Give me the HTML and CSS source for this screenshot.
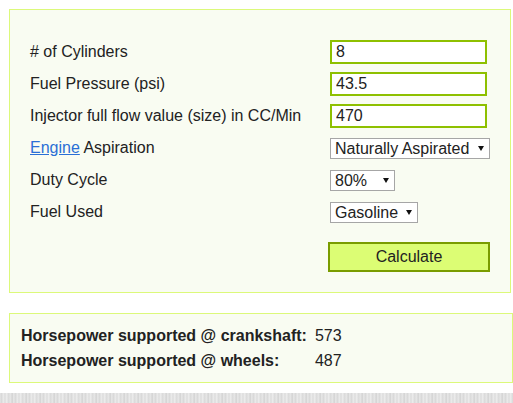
FILE: index.html
```html
<!DOCTYPE html>
<html>
<head>
<meta charset="utf-8">
<link rel="stylesheet" href="styles.css">
</head>
<body>
<div class="page">
  <form class="panel calc">
    <div class="grid">
      <label class="lbl"># of Cylinders</label>
      <div class="ctl"><input class="txt" type="text" value="8"></div>
      <label class="lbl">Fuel Pressure (psi)</label>
      <div class="ctl"><input class="txt" type="text" value="43.5"></div>
      <label class="lbl">Injector full flow value (size) in CC/Min</label>
      <div class="ctl"><input class="txt" type="text" value="470"></div>
      <label class="lbl"><a href="#" class="link">Engine</a> Aspiration</label>
      <div class="ctl"><span class="sel sel-asp"><select><option>Naturally Aspirated</option></select></span></div>
      <label class="lbl">Duty Cycle</label>
      <div class="ctl"><span class="sel sel-duty"><select><option>80%</option></select></span></div>
      <label class="lbl">Fuel Used</label>
      <div class="ctl"><span class="sel sel-fuel"><select><option>Gasoline</option></select></span></div>
    </div>
    <div class="actions">
      <button type="button" class="btn">Calculate</button>
    </div>
  </form>
  <div class="panel results">
    <div class="rk">Horsepower supported @ crankshaft:</div><div class="rv">573</div>
    <div class="rk">Horsepower supported @ wheels:</div><div class="rv">487</div>
  </div>
</div>
<div class="strip"></div>
</body>
</html>
```
FILE: styles.css
```css
html, body {
  margin: 0;
  padding: 0;
  background: #ffffff;
}
body {
  font-family: Arial, "Liberation Sans", sans-serif;
  font-size: 16px;
  color: #222222;
}
.page {
  padding: 9px 0 0 9px;
}
.panel {
  box-sizing: border-box;
  background: #f9fcf2;
  border: 1px solid #dcf97a;
  margin: 0;
}
.calc {
  width: 502px;
  height: 284px;
  padding: 30px 20px 20px 20px;
}
.grid {
  display: grid;
  grid-template-columns: 300px auto;
  grid-auto-rows: 24px;
  row-gap: 8px;
  align-items: center;
}
.lbl {
  line-height: 18px;
  white-space: nowrap;
}
.link {
  color: #2a6fd6;
  text-decoration: underline;
}
.ctl {
  display: flex;
  align-items: center;
  height: 24px;
}
.txt {
  box-sizing: border-box;
  width: 157px;
  height: 24px;
  border: 2px solid #8ec000;
  background: #ffffff;
  padding: 0 4px;
  font-family: Arial, "Liberation Sans", sans-serif;
  font-size: 16px;
  color: #222222;
  outline: none;
}
.sel {
  position: relative;
  display: inline-block;
  height: 21px;
}
.sel select {
  -webkit-appearance: none;
  appearance: none;
  box-sizing: border-box;
  height: 21px;
  border: 1px solid #a6a6a6;
  border-radius: 0;
  background: #ffffff;
  padding: 0 0 0 4px;
  margin: 0;
  font-family: Arial, "Liberation Sans", sans-serif;
  font-size: 16px;
  color: #222222;
  line-height: 19px;
  outline: none;
}
.sel::after {
  content: "";
  position: absolute;
  right: 6px;
  top: 8px;
  border-left: 3.5px solid transparent;
  border-right: 3.5px solid transparent;
  border-top: 5px solid #111111;
  pointer-events: none;
}
.sel-asp select { width: 160px; }
.sel-duty select { width: 65px; }
.sel-fuel select { width: 88px; }
.actions {
  margin-top: 18px;
  padding-left: 298px;
}
.btn {
  box-sizing: border-box;
  width: 162px;
  height: 30px;
  background: #dcfd74;
  border: 2px solid #7a9c00;
  border-radius: 0;
  font-family: Arial, "Liberation Sans", sans-serif;
  font-size: 16px;
  color: #222222;
  padding: 0;
  margin: 0;
}
.results {
  width: 504px;
  height: 70px;
  margin-top: 20px;
  padding: 9px 11px;
  display: grid;
  grid-template-columns: max-content auto;
  grid-auto-rows: 25px;
  column-gap: 8px;
  align-items: center;
}
.rk {
  font-weight: bold;
  white-space: nowrap;
}
.strip {
  margin-top: 10px;
  height: 10px;
  background:
    repeating-linear-gradient(90deg,
      #e4e4e4 0px, #d6d6d6 2px, #eeeeee 3px, #dcdcdc 5px,
      #f0f0f0 7px, #d9d9d9 8px, #e8e8e8 11px, #cfcfcf 12px, #ececec 14px);
}
```
